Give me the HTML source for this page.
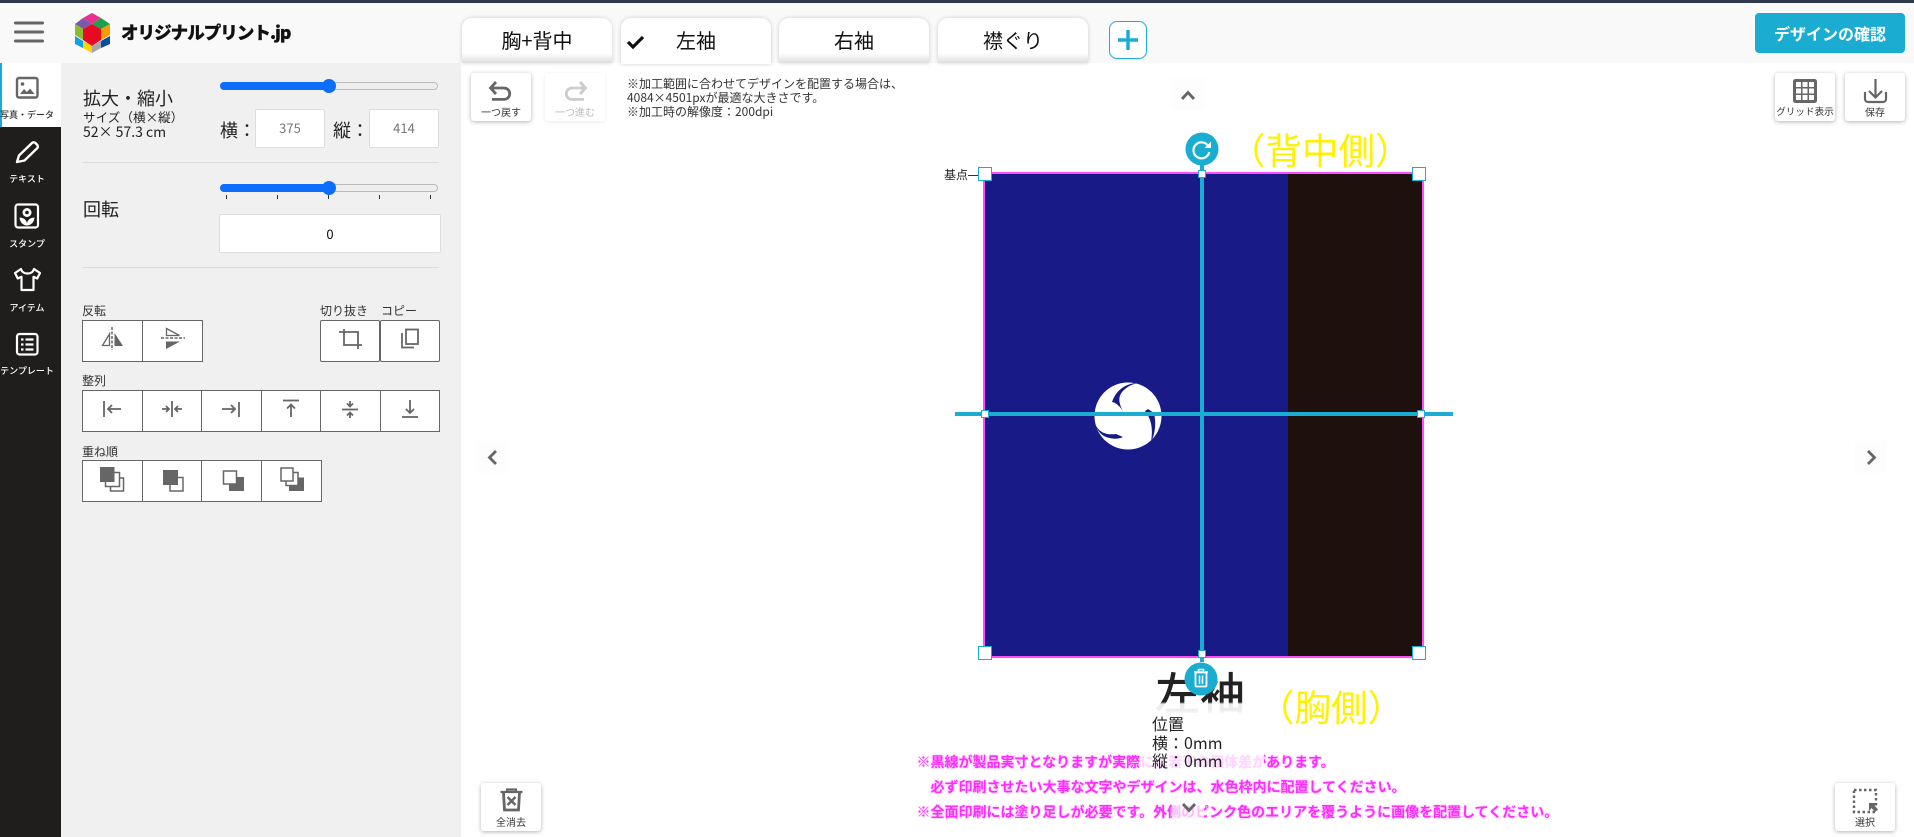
<!DOCTYPE html>
<html lang="ja">
<head>
<meta charset="utf-8">
<title>デザイン</title>
<style>
*{box-sizing:border-box;margin:0;padding:0}
html,body{width:1914px;height:837px;overflow:hidden;background:#fff;font-family:"Noto Sans CJK JP","Liberation Sans",sans-serif;color:#222}
.a{position:absolute}
.t{position:absolute;line-height:1;white-space:nowrap}
.c{text-align:center}
.tab{position:absolute;top:18px;width:150px;height:45px;background:#fff;border-radius:10px 10px 0 0;box-shadow:0 0 4px rgba(0,0,0,.18);font-size:20px;line-height:44px;text-align:center;color:#111}
.tab:after{content:"";position:absolute;left:0;right:0;bottom:0;height:10px;background:linear-gradient(to bottom,rgba(0,0,0,0),rgba(0,0,0,.13))}
.tab.on{height:46px}
.tab.on:after{display:none}
.btn{position:absolute;width:60px;height:48px;background:#fff;border-radius:3px;box-shadow:0 1px 4px rgba(0,0,0,.3)}
.lbl{position:absolute;left:-5px;right:-5px;text-align:center;font-size:10px;line-height:1;top:34px;color:#333;white-space:nowrap}
.side{position:absolute;left:0;width:54px;text-align:center;font-size:9px;line-height:1;color:#fff;font-weight:500;white-space:nowrap;letter-spacing:0}
.hr{position:absolute;left:83px;width:356px;height:1px;background:#dcdcdc}
.inp{position:absolute;background:#fff;border:1px solid #ddd;border-radius:2px;text-align:center}
.cell{position:absolute;background:#fff;border:1px solid #666;height:42px}
.sm{font-size:12px;color:#333}
.track{position:absolute;left:220px;width:218px;height:8px;border-radius:4px;background:#eee;border:1px solid #bbb}
.fill{position:absolute;left:220px;width:110px;height:8px;border-radius:4px;background:#0d6efd}
.thumb{position:absolute;left:322px;width:14px;height:14px;border-radius:50%;background:#0d6efd}
.tick{position:absolute;top:195px;width:1px;height:4px;background:#333}
.h{position:absolute;width:14px;height:14px;background:#fff;border:1px solid #1badd1}
.h2{position:absolute;width:8px;height:8px;background:#fff;border:1px solid #1badd1}
.pink{position:absolute;left:916.5px;font-size:14px;line-height:1;font-weight:700;color:#ff2cff;white-space:nowrap;text-shadow:0 0 2px rgba(255,90,255,.55)}
.nav{position:absolute;width:32px;height:32px;background:rgba(252,252,252,.7)}
svg{position:absolute;left:0;top:0}
</style>
</head>
<body>
<!-- header -->
<div class="a" style="left:0;top:0;width:1914px;height:63px;background:#f9f9f9"></div>
<div class="a" style="left:0;top:0;width:1914px;height:3px;background:#2f3a4c"></div>
<div class="t" style="left:121px;top:24px;font-size:17.5px;font-weight:900;color:#111;letter-spacing:-.95px;-webkit-text-stroke:.3px #111">オリジナルプリント.jp</div>

<div class="tab" style="left:462px">胸+背中</div>
<div class="tab on" style="left:621px">左袖</div>
<div class="tab" style="left:779px">右袖</div>
<div class="tab" style="left:938px">襟ぐり</div>
<div class="a" style="left:1109px;top:21px;width:38px;height:38px;border:1px solid #1badd1;border-radius:8px;background:#fff"></div>
<div class="a" style="left:1755px;top:13px;width:150px;height:40px;background:#1badd1;border-radius:4px;color:#fff;font-size:16px;font-weight:700;line-height:41px;text-align:center">デザインの確認</div>

<!-- sidebar -->
<div class="a" style="left:0;top:63px;width:61px;height:774px;background:#1f1e1c"></div>
<div class="a" style="left:0;top:63px;width:61px;height:64px;background:#fff"></div>
<div class="a" style="left:0;top:63px;width:2px;height:64px;background:#1badd1"></div>
<div class="side" style="top:110px;color:#333">写真・データ</div>
<div class="side" style="top:174px">テキスト</div>
<div class="side" style="top:238.500px">スタンプ</div>
<div class="side" style="top:302.500px">アイテム</div>
<div class="side" style="top:366px">テンプレート</div>

<!-- panel -->
<div class="a" style="left:61px;top:63px;width:400px;height:774px;background:#f0f0f0"></div>
<div class="t" style="left:83px;top:88.500px;font-size:18px">拡大・縮小</div>
<div class="t" style="left:83px;top:111px;font-size:12.6px">サイズ（横×縦）</div>
<div class="t" style="left:83px;top:124.500px;font-size:14px">52× 57.3 cm</div>
<div class="track" style="top:82px"></div><div class="fill" style="top:82px"></div><div class="thumb" style="top:79px"></div>
<div class="t" style="left:220px;top:120.500px;font-size:18px">横：</div>
<div class="inp" style="left:255px;top:109px;width:70px;height:39px;font-size:13px;line-height:35px;color:#777">375</div>
<div class="t" style="left:333px;top:120.500px;font-size:18px">縦：</div>
<div class="inp" style="left:369px;top:109px;width:70px;height:39px;font-size:13px;line-height:35px;color:#777">414</div>
<div class="hr" style="top:162px"></div>
<div class="track" style="top:184px"></div><div class="fill" style="top:184px"></div><div class="thumb" style="top:181px"></div>
<div class="tick" style="left:226px"></div><div class="tick" style="left:277px"></div><div class="tick" style="left:328px"></div><div class="tick" style="left:379px"></div><div class="tick" style="left:430px"></div>
<div class="t" style="left:83px;top:199.500px;font-size:18px">回転</div>
<div class="inp" style="left:219px;top:214px;width:222px;height:39px;font-size:13px;line-height:37px;color:#111">0</div>
<div class="hr" style="top:267px"></div>

<div class="t sm" style="left:82px;top:305px">反転</div>
<div class="t sm" style="left:320px;top:305px">切り抜き</div>
<div class="t sm" style="left:381px;top:305px">コピー</div>
<div class="cell" style="left:82px;top:320px;width:61px"></div>
<div class="cell" style="left:142px;top:320px;width:61px"></div>
<div class="cell" style="left:320px;top:320px;width:60px;border-radius:2px"></div>
<div class="cell" style="left:380px;top:320px;width:60px;border-radius:2px"></div>

<div class="t sm" style="left:82px;top:375px">整列</div>
<div class="cell" style="left:82px;top:390px;width:61px"></div>
<div class="cell" style="left:142px;top:390px;width:60px"></div>
<div class="cell" style="left:201px;top:390px;width:61px"></div>
<div class="cell" style="left:261px;top:390px;width:60px"></div>
<div class="cell" style="left:320px;top:390px;width:61px"></div>
<div class="cell" style="left:380px;top:390px;width:60px"></div>

<div class="t sm" style="left:82px;top:445.500px">重ね順</div>
<div class="cell" style="left:82px;top:460px;width:61px"></div>
<div class="cell" style="left:142px;top:460px;width:60px"></div>
<div class="cell" style="left:201px;top:460px;width:61px"></div>
<div class="cell" style="left:261px;top:460px;width:61px"></div>

<!-- toolbar -->
<div class="btn" style="left:471px;top:73px"><div class="lbl">一つ戻す</div></div>
<div class="btn" style="left:545px;top:73px;box-shadow:0 1px 4px rgba(0,0,0,.08)"><div class="lbl" style="color:#bbb">一つ進む</div></div>
<div class="t" style="left:627px;top:76.500px;font-size:12px;line-height:14px;color:#333;white-space:pre">※加工範囲に合わせてデザインを配置する場合は、
4084×4501pxが最適な大きさです。
※加工時の解像度：200dpi</div>
<div class="btn" style="left:1775px;top:73px"><div class="lbl" style="font-size:9.6px">グリッド表示</div></div>
<div class="btn" style="left:1845px;top:73px"><div class="lbl">保存</div></div>
<div class="btn" style="left:481px;top:783px"><div class="lbl">全消去</div></div>
<div class="btn" style="left:1835px;top:783px"><div class="lbl">選択</div></div>

<!-- product -->
<div class="a" style="left:983px;top:172px;width:441px;height:486px;background:#ff4cff"></div>
<div class="a" style="left:985px;top:174px;width:303px;height:482px;background:#171a87"></div>
<div class="a" style="left:1288px;top:174px;width:134px;height:482px;background:#1e110d"></div>
<div class="t" style="left:944px;top:168.500px;font-size:12px;color:#222">基点</div>
<div class="a" style="left:968px;top:175px;width:11px;height:1px;background:#333"></div>

<div class="t" style="left:1229px;top:131px;font-size:36.500px;color:#fff200">（背中側）</div>
<div class="t" style="left:1258px;top:688px;font-size:36.500px;color:#fff200">（胸側）</div>

<div class="t" style="left:1155px;top:667.500px;font-size:45px;height:48px;line-height:46px;font-weight:500;color:transparent;background:linear-gradient(to bottom,#222 0,#222 34px,#ececec 36px,#ececec 42px,#fff 47px);-webkit-background-clip:text;background-clip:text">左袖</div>

<div class="pink" style="top:755px">※黒線が製品実寸となりますが実際には若干の個体差があります。</div>
<div class="pink" style="top:780px">　必ず印刷させたい大事な文字やデザインは、水色枠内に配置してください。</div>
<div class="pink" style="top:804.500px">※全面印刷には塗り足しが必要です。外側のピンク色のエリアを覆うように画像を配置してください。</div>
<div class="a" style="left:1141px;top:754px;width:123px;height:18px;background:rgba(255,255,255,.8)"></div>
<div class="t" style="left:1152px;top:714px;font-size:16px;line-height:18.5px;color:#222;white-space:pre">位置
横：0mm
縦：0mm</div>

<div class="nav" style="left:1172px;top:78px"></div>
<div class="nav" style="left:1172px;top:793px"></div>
<div class="nav" style="left:476px;top:441px"></div>
<div class="nav" style="left:1855px;top:441px"></div>

<!-- selection lines -->
<div class="a" style="left:955px;top:412px;width:498px;height:4px;background:#1badd1"></div>
<div class="a" style="left:1200px;top:149px;width:4px;height:513px;background:#1badd1"></div>

<svg width="1914" height="837" viewBox="0 0 1914 837" fill="none" style="z-index:3">
<!-- hamburger -->
<g stroke="#666" stroke-width="3" stroke-linecap="round"><path d="M15.500 23H42.500M15.500 32H42.500M15.500 41H42.500"/></g>
<!-- logo cube -->
<polygon points="92,13 101,18 92,24 83,18" fill="#e8308f"/>
<polygon points="83,18 92,24 83,29 75,24" fill="#7a5aa6"/>
<polygon points="101,18 110,24 101,29 92,24" fill="#1ca04a"/>
<polygon points="92,24 101,29 101,40 92,46 83,40 83,29" fill="#e60b22"/>
<polygon points="75,24 83,29 83,40 75,35" fill="#8cbc2a"/>
<polygon points="110,24 101,29 101,40 110,35" fill="#f59c00"/>
<polygon points="75,36 83,41 83,48 75,44" fill="#0ea3e0"/>
<polygon points="83,41 92,46 92,53 83,48" fill="#ffd400"/>
<polygon points="92,46 101,41 101,48 92,53" fill="#a8a8a8"/>
<polygon points="101,41 110,36 110,44 101,48" fill="#004da0"/>
<!-- check + plus -->
<path d="M628 42l5 5 10-10" stroke="#111" stroke-width="3.200"/>
<path d="M1128 30V50M1118 40H1138" stroke="#1badd1" stroke-width="3.500"/>
<!-- side icons -->
<rect x="17" y="78" width="20.500" height="19.500" rx="2" stroke="#666" stroke-width="2.400"/>
<circle cx="22.500" cy="84" r="1.800" fill="#666"/>
<path d="M20 94l4-5 3 3 3-3.500 4.500 5.500z" fill="#666"/>
<path d="M17 162l2-6.500L32 143a2.500 2.500 0 0 1 3.400 0l1.800 1.800a2.500 2.500 0 0 1 0 3.400L24.500 160.500z" stroke="#fff" stroke-width="2.400" stroke-linejoin="round"/>
<rect x="15.500" y="204.500" width="22.500" height="23" rx="2.500" stroke="#fff" stroke-width="2.200"/>
<circle cx="27" cy="212.500" r="4.500" fill="#fff"/><circle cx="27" cy="212.500" r="1.800" fill="#1f1e1c"/>
<path d="M19.500 217.500c4 .2 6.500 2 7.500 5.500 1-3.500 3.500-5.300 7.500-5.500-.3 4.500-3.500 8-7.500 8s-7.200-3.500-7.500-8z" fill="#fff"/>
<path d="M21 269l-6 4 2.800 5.500 3.700-1.700V290h12V276.800l3.700 1.700 2.800-5.500-6-4c-.8 3-3 4.500-6.500 4.500S21.800 272 21 269z" stroke="#fff" stroke-width="2.200" stroke-linejoin="round"/>
<rect x="17" y="334" width="20.500" height="20.500" rx="2.500" stroke="#fff" stroke-width="2.200"/>
<path d="M21 339.500h2.500M21 344.500h2.500M21 349.500h2.500M25.500 339.500h8M25.500 344.500h8M25.500 349.500h8" stroke="#fff" stroke-width="2.200"/>
<!-- flips -->
<path d="M112 327V350" stroke="#666" stroke-width="1.500" stroke-dasharray="3 1.500"/>
<path d="M109.500 334V345.500H102.500z" stroke="#666" stroke-width="1.300"/>
<path d="M114.500 333V346H123z" fill="#666"/>
<path d="M161 338H185" stroke="#666" stroke-width="1.500" stroke-dasharray="3 1.500"/>
<path d="M166.500 328.500V335.500H179.500z" stroke="#666" stroke-width="1.300"/>
<path d="M166 341.500H180L166 349z" fill="#666"/>
<!-- crop / copy -->
<path d="M339 332H358V349M344 329V345H362" stroke="#666" stroke-width="1.800"/>
<rect x="406" y="329.500" width="12" height="14.500" stroke="#666" stroke-width="1.800"/>
<path d="M402 333V347.500H414" stroke="#666" stroke-width="1.800"/>
<!-- align -->
<g stroke="#666" stroke-width="1.800">
<path d="M104 401V417"/><path d="M121 409H108M112 405l-4 4 4 4"/>
<path d="M172 401V417"/><path d="M162 409H169M166 406l3 3-3 3M182 409H175M178 406l-3 3 3 3"/>
<path d="M239 402V417"/><path d="M222 409H235M231 405l4 4-4 4"/>
<path d="M283 400.500H299"/><path d="M291 417V404.500M287 408.500l4-4 4 4"/>
<path d="M342 409.500H358"/><path d="M350 401V406.500M347 403.500l3 3 3-3M350 418V412.500M347 415.500l3-3 3 3"/>
<path d="M402 417H418"/><path d="M410 400V413M406 409l4 4 4-4"/>
</g>
<!-- layers -->
<g stroke="#666" stroke-width="1.500">
<rect x="110.500" y="478" width="13" height="13"/>
<rect x="105.500" y="472.500" width="14" height="14" fill="#fff"/>
<rect x="100" y="467" width="14.500" height="15" fill="#666" stroke="none"/>
<rect x="170" y="477.500" width="13" height="13.500"/>
<rect x="163" y="470" width="15" height="15" fill="#666" stroke="none"/>
<rect x="229" y="477" width="15" height="14" fill="#666" stroke="none"/>
<rect x="223.500" y="471" width="13" height="13" fill="#fff"/>
<rect x="289" y="477.500" width="15" height="13.500" fill="#666" stroke="none"/>
<rect x="286" y="472.500" width="12" height="13" fill="#fff"/>
<rect x="281" y="468" width="12" height="13" fill="#fff"/>
</g>
<!-- undo / redo -->
<path d="M496 82l-5.500 6 5.500 6M491 88H504a5.700 5.700 0 0 1 0 11.400H492" stroke="#666" stroke-width="2.800"/>
<path d="M580 82l5.500 6-5.500 6M585 88H572a5.700 5.700 0 0 0 0 11.400H584" stroke="#ccc" stroke-width="2.800"/>
<!-- grid -->
<rect x="1793" y="79" width="24" height="24" rx="2.500" fill="#666"/>
<g fill="#fff"><rect x="1796" y="82" width="5" height="5"/><rect x="1802.500" y="82" width="5" height="5"/><rect x="1809" y="82" width="5" height="5"/><rect x="1796" y="88.500" width="5" height="5"/><rect x="1802.500" y="88.500" width="5" height="5"/><rect x="1809" y="88.500" width="5" height="5"/><rect x="1796" y="95" width="5" height="5"/><rect x="1802.500" y="95" width="5" height="5"/><rect x="1809" y="95" width="5" height="5"/></g>
<!-- save -->
<path d="M1875.500 79V97M1869 91l6.500 6.500 6.500-6.500M1865 92V99a3 3 0 0 0 3 3H1883a3 3 0 0 0 3-3V92" stroke="#666" stroke-width="2.200"/>
<!-- wipe -->
<path d="M500.500 792H522.500M507 791V789.500H516V791" stroke="#666" stroke-width="2.200"/>
<path d="M503.500 792.500L504.500 810H518.500L519.500 792.500" stroke="#666" stroke-width="2.800"/>
<path d="M507.500 797l8 8M515.500 797l-8 8" stroke="#666" stroke-width="2.500"/>
<!-- select -->
<rect x="1854" y="790" width="22" height="22" stroke="#666" stroke-width="2.400" stroke-dasharray="2.500 2.500"/>
<path d="M1869 803H1877L1874.500 805.500 1878 809.500 1875 812 1871.500 808 1869 811z" fill="#666"/>
<!-- chevrons -->
<g stroke="#666" stroke-width="2.800">
<path d="M1182 99l6-6.500 6 6.500"/>
<path d="M1183 804l6 6.500 6-6.500"/>
<path d="M496 451l-6.500 6.500 6.500 6.500"/>
<path d="M1868 451l6.500 6.500-6.500 6.500"/>
</g>
<!-- tomoe -->
<g transform="translate(1128 416)">
<circle r="33.500" fill="#fff"/>
<g fill="#171a87">
<path d="M10 -33C0 -33 -11 -28 -16 -14C-11 -13 -8 -9 -5 -5C-9 -12 -11 -20 -4 -26C0 -30 5 -32 10 -33Z"/>
<path d="M17 -5L20 -7L26 -3C28.500 8 27 18 23 26C25 14 24 4 17 -5Z"/>
<path d="M-33 8C-28 18 -20 19 -12 18L-5 21C-10 23.500 -16 23 -22 21C-27 19 -31 14 -33 8Z"/>
</g>
</g>
<rect x="955" y="412" width="498" height="4" fill="#1badd1"/>
<rect x="1200" y="170" width="4" height="490" fill="#1badd1"/>
<!-- rotate handle -->
<circle cx="1202" cy="149" r="16.500" fill="#1badd1"/>
<path d="M1208.500 146.500a8 8 0 1 0 .8 5.500" stroke="#fff" stroke-width="2.200"/>
<path d="M1211 141.500V148H1204.500z" fill="#fff"/>
<!-- trash handle -->
<circle cx="1201" cy="679" r="16.500" fill="#1badd1"/>
<path d="M1194 672H1208M1198.500 671V669.500H1203.500V671" stroke="#fff" stroke-width="1.600"/>
<rect x="1195.500" y="672.500" width="11" height="14" rx="1" stroke="#fff" stroke-width="1.800"/>
<path d="M1199.500 675.500V684M1202.500 675.500V684" stroke="#fff" stroke-width="1.500"/>
</svg>

<!-- handles -->
<div class="h" style="left:978px;top:167px;z-index:4"></div>
<div class="h" style="left:1412px;top:167px;z-index:4"></div>
<div class="h" style="left:978px;top:646px;z-index:4"></div>
<div class="h" style="left:1412px;top:646px;z-index:4"></div>
<div class="h2" style="left:1198px;top:170px;z-index:4"></div>
<div class="h2" style="left:1198px;top:650px;z-index:4"></div>
<div class="h2" style="left:981px;top:410px;z-index:4"></div>
<div class="h2" style="left:1417px;top:410px;z-index:4"></div>
</body>
</html>
